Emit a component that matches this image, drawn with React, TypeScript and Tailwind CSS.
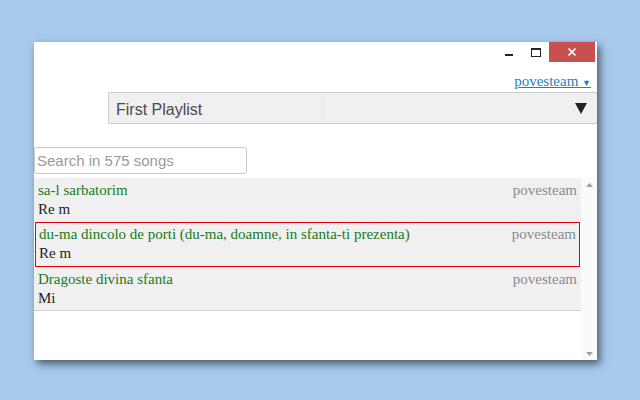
import React from 'react';

const songs = [
  { title: 'sa-l sarbatorim', key: 'Re m', author: 'povesteam', selected: false },
  { title: 'du-ma dincolo de porti (du-ma, doamne, in sfanta-ti prezenta)', key: 'Re m', author: 'povesteam', selected: true },
  { title: 'Dragoste divina sfanta', key: 'Mi', author: 'povesteam', selected: false },
];

const serif = { fontFamily: '"Liberation Serif", "Times New Roman", serif' };
const sans = { fontFamily: '"Liberation Sans", Arial, sans-serif' };

export default function App() {
  return (
    <div className="w-[640px] h-[400px] bg-[#a7c9ec] pt-[42px] pl-[34px]">
      <div className="w-[563px] h-[318px] bg-white flex flex-col shadow-[3px_4px_8px_rgba(0,0,0,0.55)]">
        {/* title bar */}
        <div className="h-[20px] flex justify-end items-start pr-[2px]">
          <button className="w-[26px] h-[20px] flex items-center justify-center">
            <span className="block w-[8px] h-[2px] bg-[#222] mt-[5px]" />
          </button>
          <button className="w-[27px] h-[20px] flex items-center justify-center">
            <span className="block w-[10px] h-[9px] border border-[#222] border-t-2" />
          </button>
          <button className="w-[46px] h-[20px] bg-[#c75050] flex items-center justify-center">
            <svg width="10" height="10" viewBox="0 0 10 10">
              <path d="M1.5 1.5 L8.5 8.5 M8.5 1.5 L1.5 8.5" stroke="#fff" strokeWidth="1.6" />
            </svg>
          </button>
        </div>

        {/* user link */}
        <div className="flex justify-end pr-[6px] mt-[9px] h-[20px]" style={serif}>
          <a className="text-[15px] text-[#1d7fc4] underline leading-[20px]">
            povesteam <span className="text-[9px] align-middle">▼</span>
          </a>
        </div>

        {/* playlist select */}
        <div className="ml-[74px] mt-[1px] h-[32px] bg-[#f0f0f0] border-y border-l border-[#cfcfcf] flex items-center justify-between pl-[7px] pr-[10px]" style={sans}>
          <div className="w-[208px] h-[26px] flex items-center pt-[3px] border-r border-[#e4e4e4] text-[16px] text-[#4a4a4a]">
            First Playlist
          </div>
          <svg width="12" height="11" viewBox="0 0 12 11" className="mt-[1px]">
            <path d="M0 0 H12 L6 11 Z" fill="#222" />
          </svg>
        </div>

        {/* search */}
        <div className="mt-[23px]">
          <input
            className="w-[213px] h-[27px] border border-[#c8c8c8] rounded-[3px] px-[2px] text-[15px] text-[#333] placeholder:text-[#999] outline-none"
            style={sans}
            placeholder="Search in 575 songs"
          />
        </div>

        {/* list */}
        <div className="mt-[4px] flex-1 flex min-h-0">
          <div className="flex-1 flex flex-col" style={serif}>
            {songs.map((s, i) => (
              <div
                key={i}
                className={
                  s.selected
                    ? 'bg-[#f0f0f0] border border-solid border-red-600 mx-[1px] px-[3px] pt-[2px] pb-[3px] flex justify-between'
                    : i === songs.length - 1
                      ? 'bg-[#f0f0f0] px-[4px] pt-[3px] pb-[2px] flex justify-between border-b border-[#cfcfcf]'
                      : 'bg-[#f0f0f0] px-[4px] pt-[3px] pb-[3px] flex justify-between'
                }
              >
                <div className="flex flex-col">
                  <span className="text-[15px] leading-[19px] text-[#197a19]">{s.title}</span>
                  <span className="text-[15px] leading-[19px] text-[#222]">{s.key}</span>
                </div>
                <span className="text-[15px] leading-[19px] text-[#8a8a8a]">{s.author}</span>
              </div>
            ))}
          </div>
          {/* scrollbar */}
          <div className="w-[16px] flex flex-col justify-between items-center pt-[5px] pb-[4px] bg-[#fafafa]">
            <svg width="7" height="4" viewBox="0 0 7 4">
              <path d="M0 4 L3.5 0 L7 4 Z" fill="#a0a0a0" />
            </svg>
            <svg width="7" height="4" viewBox="0 0 7 4">
              <path d="M0 0 L3.5 4 L7 0 Z" fill="#a0a0a0" />
            </svg>
          </div>
        </div>
      </div>
    </div>
  );
}
